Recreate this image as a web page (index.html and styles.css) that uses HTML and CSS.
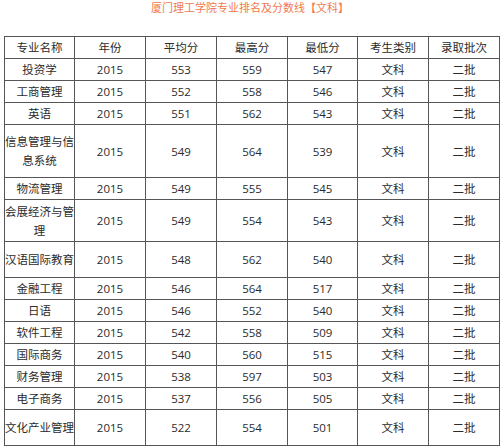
FILE: index.html
```html
<!DOCTYPE html>
<html lang="zh-CN">
<head>
<meta charset="utf-8">
<title>厦门理工学院专业排名及分数线【文科】</title>
<link rel="stylesheet" href="styles.css">
</head>
<body>
<div class="page">
  <p class="title">厦门理工学院专业排名及分数线【文科】</p>
  <table class="score-table">
    <colgroup>
      <col class="c1"><col class="c2"><col class="c3"><col class="c4"><col class="c5"><col class="c6"><col class="c7">
    </colgroup>
    <tbody>
      <tr><td>专业名称</td><td>年份</td><td>平均分</td><td>最高分</td><td>最低分</td><td>考生类别</td><td>录取批次</td></tr>
      <tr><td>投资学</td><td>2015</td><td>553</td><td>559</td><td>547</td><td>文科</td><td>二批</td></tr>
      <tr><td>工商管理</td><td>2015</td><td>552</td><td>558</td><td>546</td><td>文科</td><td>二批</td></tr>
      <tr><td>英语</td><td>2015</td><td>551</td><td>562</td><td>543</td><td>文科</td><td>二批</td></tr>
      <tr class="h53"><td>信息管理与信息系统</td><td>2015</td><td>549</td><td>564</td><td>539</td><td>文科</td><td>二批</td></tr>
      <tr><td>物流管理</td><td>2015</td><td>549</td><td>555</td><td>545</td><td>文科</td><td>二批</td></tr>
      <tr class="h42"><td>会展经济与管理</td><td>2015</td><td>549</td><td>554</td><td>543</td><td>文科</td><td>二批</td></tr>
      <tr class="h36"><td>汉语国际教育</td><td>2015</td><td>548</td><td>562</td><td>540</td><td>文科</td><td>二批</td></tr>
      <tr><td>金融工程</td><td>2015</td><td>546</td><td>564</td><td>517</td><td>文科</td><td>二批</td></tr>
      <tr><td>日语</td><td>2015</td><td>546</td><td>552</td><td>540</td><td>文科</td><td>二批</td></tr>
      <tr><td>软件工程</td><td>2015</td><td>542</td><td>558</td><td>509</td><td>文科</td><td>二批</td></tr>
      <tr><td>国际商务</td><td>2015</td><td>540</td><td>560</td><td>515</td><td>文科</td><td>二批</td></tr>
      <tr><td>财务管理</td><td>2015</td><td>538</td><td>597</td><td>503</td><td>文科</td><td>二批</td></tr>
      <tr><td>电子商务</td><td>2015</td><td>537</td><td>556</td><td>505</td><td>文科</td><td>二批</td></tr>
      <tr class="h36"><td>文化产业管理</td><td>2015</td><td>522</td><td>554</td><td>501</td><td>文科</td><td>二批</td></tr>
      <tr><td></td><td></td><td></td><td></td><td></td><td></td><td></td></tr>
    </tbody>
  </table>
</div>
</body>
</html>
```

FILE: styles.css
```css
html, body {
  margin: 0;
  padding: 0;
  background: #ffffff;
}

.page {
  width: 500px;
  height: 446px;
  overflow: hidden;
  font-family: "Noto Sans CJK SC", "Open Sans", sans-serif;
  color: #2b2b2b;
}

.title {
  margin: 0;
  padding-top: 1px;
  height: 35px;
  font-size: 11px;
  line-height: 12px;
  text-align: center;
  color: #ef7b4d;
}

.score-table {
  margin-left: 4px;
  border-collapse: collapse;
  table-layout: fixed;
  width: 495px;
  font-size: 11.5px;
}

.c1 { width: 70px; }
.c2, .c3, .c4, .c6, .c7 { width: 71px; }
.c5 { width: 70px; }

.score-table td {
  border: 1px solid #555555;
  padding: 0;
  height: 21px;
  line-height: 19px;
  text-align: center;
  vertical-align: middle;
  font-family: "Open Sans", "Noto Sans CJK SC", sans-serif;
}

.score-table tr.h53 td { height: 52px; }
.score-table tr.h42 td { height: 41px; }
.score-table tr.h36 td { height: 35px; }
```
